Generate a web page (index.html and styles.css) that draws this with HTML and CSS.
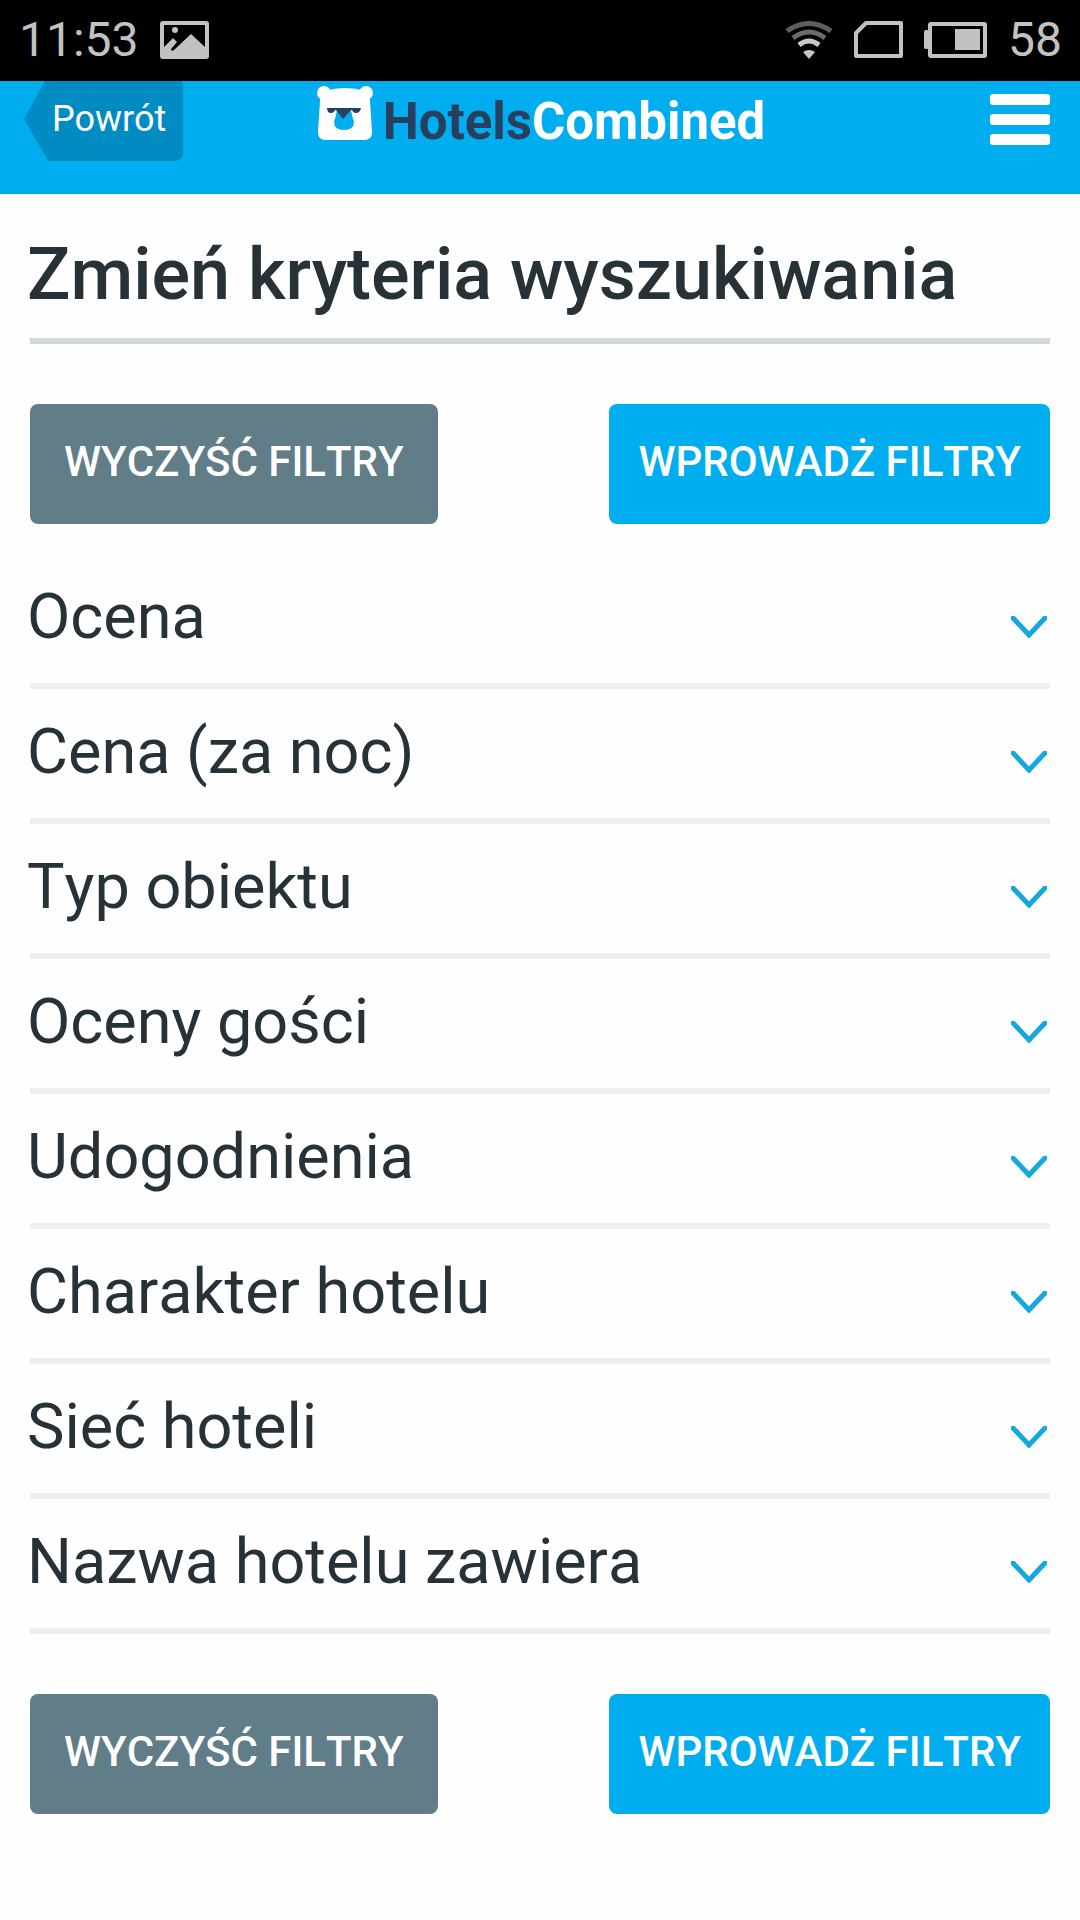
FILE: index.html
```html
<!DOCTYPE html>
<html lang="pl">
<head>
    <meta charset="UTF-8">
    <meta name="viewport" content="width=device-width, initial-scale=1.0">
    <title>HotelsCombined</title>
    <link rel="stylesheet" href="styles.css">
</head>
<body>
    <div class="status-bar">
        <span>11:53</span>
        <svg width="49" height="39" viewBox="0 0 49 39">
            <path fill="#c2c2c2" fill-rule="evenodd" d="M3 0H46Q49 0 49 3V35Q49 38 46 38H3Q0 38 0 35V3Q0 0 3 0ZM4 4V26L13 17L17 21L11 28Q11 31 14 29L31 13L45 26V4Z"/>
            <circle cx="15" cy="9" r="3" fill="#c2c2c2"/>
        </svg>
        <div class="status-right">
            <svg width="48" height="38" viewBox="0 0 48 38" fill="none" stroke-width="5">
                <path stroke="#5e5e5e" d="M2 10Q24-5 46 10"/>
                <path stroke="#6c6c6c" d="M8 17Q24 5 40 17"/>
                <path stroke="#c8c8c8" d="M14 24Q24 16 34 24"/>
                <path fill="#c8c8c8" d="M18 31Q24 27 30 31L24 38Z"/>
            </svg>
            <svg width="49" height="38" viewBox="0 0 49 38">
                <path fill="none" stroke="#c2c2c2" stroke-width="4" stroke-linejoin="round" d="M12 2H47V35H2V12Z"/>
            </svg>
            <svg width="63" height="36" viewBox="0 0 63 36">
                <rect x="6" y="2" width="55" height="32" rx="1" fill="none" stroke="#c2c2c2" stroke-width="4"/>
                <rect x="0" y="8" width="5" height="19" rx="2" fill="#c2c2c2"/>
                <rect x="31" y="7" width="25" height="21" fill="#c2c2c2"/>
            </svg>
            <span>58</span>
        </div>
    </div>

    <header class="header">
        <a class="back" href="#">Powrót</a>
        <a class="logo" href="#">
            <svg width="56" height="54" viewBox="0 0 56 54">
                <g fill="#fff">
                    <circle cx="7" cy="7" r="7"/>
                    <circle cx="49" cy="7" r="7"/>
                    <path d="M8 5Q28-1 48 5Q52 7 53 15L55 46Q55 54 47 54H9Q1 54 1 46L3 15Q4 7 8 5Z"/>
                </g>
                <path fill="#00aef0" d="M20 24H34Q35 30 37 36Q37 44 27 44Q17 44 17 36Q19 30 20 24Z"/>
                <path fill="#274060" d="M10 22H44Q43 27 39 27Q36 27 35 24H34L26 33L19 24H18Q17 27 14 27Q10 27 10 22Z"/>
            </svg>
            <span class="logo-text"><span class="dark">Hotels</span>Combined</span>
        </a>
        <button class="menu" aria-label="Menu">
            <span></span>
            <span></span>
            <span></span>
        </button>
    </header>

    <main class="content">
        <h1>Zmień kryteria wyszukiwania</h1>

        <div class="actions">
            <button class="btn clear">WYCZYŚĆ FILTRY</button>
            <button class="btn apply">WPROWADŻ FILTRY</button>
        </div>

        <div class="filters">
            <button class="filter">Ocena <svg class="chevron" viewBox="0 0 36 22"><path d="M2 2L18 19L34 2"/></svg></button>
            <button class="filter">Cena (za noc) <svg class="chevron" viewBox="0 0 36 22"><path d="M2 2L18 19L34 2"/></svg></button>
            <button class="filter">Typ obiektu <svg class="chevron" viewBox="0 0 36 22"><path d="M2 2L18 19L34 2"/></svg></button>
            <button class="filter">Oceny gości <svg class="chevron" viewBox="0 0 36 22"><path d="M2 2L18 19L34 2"/></svg></button>
            <button class="filter">Udogodnienia <svg class="chevron" viewBox="0 0 36 22"><path d="M2 2L18 19L34 2"/></svg></button>
            <button class="filter">Charakter hotelu <svg class="chevron" viewBox="0 0 36 22"><path d="M2 2L18 19L34 2"/></svg></button>
            <button class="filter">Sieć hoteli <svg class="chevron" viewBox="0 0 36 22"><path d="M2 2L18 19L34 2"/></svg></button>
            <button class="filter">Nazwa hotelu zawiera <svg class="chevron" viewBox="0 0 36 22"><path d="M2 2L18 19L34 2"/></svg></button>
        </div>

        <div class="actions">
            <button class="btn clear">WYCZYŚĆ FILTRY</button>
            <button class="btn apply">WPROWADŻ FILTRY</button>
        </div>
    </main>
</body>
</html>
```
FILE: styles.css
```css
* {
    box-sizing: border-box;
}
body {
    margin: 0;
    font-family: Roboto, sans-serif;
    color: #263238;
    background-color: #fefefe;
}
button {
    font-family: inherit;
    font-kerning: none;
    border: none;
    cursor: pointer;
}
.status-bar {
    display: flex;
    align-items: center;
    gap: 21px;
    padding: 12px 18px 13px 19px;
    font-size: 48px;
    line-height: 56px;
    color: #c2c2c2;
    background-color: #000;
}
.status-right {
    display: flex;
    align-items: center;
    gap: 21px;
    margin-left: auto;
}
.header {
    display: grid;
    grid-template-columns: 1fr auto 1fr;
    align-items: start;
    padding: 0 30px 33px 24px;
    background-color: #00aef0;
}
.back {
    justify-self: start;
    padding: 17px 17px 21px 28px;
    font-size: 36px;
    line-height: 42px;
    color: #fff;
    text-decoration: none;
    background-color: #008bc2;
    border-radius: 0 4px 8px 0;
    clip-path: polygon(21px 0, 100% 0, 100% 100%, 24px 100%, 0 38px);
}
.logo {
    display: flex;
    gap: 10px;
    padding: 5px 0 0 8px;
    text-decoration: none;
}
.logo-text {
    font-size: 51px;
    font-weight: bold;
    line-height: 71px;
    color: #fff;
}
.logo-text .dark {
    color: #274060;
}
.menu {
    display: flex;
    flex-direction: column;
    justify-self: end;
    gap: 9px;
    width: 60px;
    margin-top: 13px;
    padding: 0;
    background: none;
}
.menu span {
    height: 11px;
    border-radius: 3px;
    background-color: #fff;
}
.content {
    padding: 0 30px;
}
h1 {
    margin: 0;
    padding: 39px 0 21px;
    font-size: 72px;
    font-weight: 500;
    line-height: 84px;
    text-indent: -3px;
    border-bottom: 6px solid #cfd8da;
}
.actions {
    display: flex;
    justify-content: space-between;
    padding: 60px 0 30px;
}
.btn {
    padding: 33px 29px 37px;
    font-size: 42px;
    font-weight: 500;
    line-height: 50px;
    color: #fff;
    border-radius: 8px;
}
.clear {
    padding-left: 34px;
    padding-right: 34px;
    background-color: #607d88;
}
.apply {
    background-color: #00aef0;
}
.filter {
    display: flex;
    justify-content: space-between;
    align-items: center;
    width: 100%;
    padding: 26px 3px 29px 0;
    font-size: 63px;
    line-height: 74px;
    color: #263238;
    text-align: left;
    text-indent: -3px;
    background: none;
    border-bottom: 6px solid #eceff0;
}
.chevron {
    width: 36px;
    height: 22px;
    margin-top: 20px;
    fill: none;
    stroke: #14a8e0;
    stroke-width: 5;
    stroke-linecap: round;
}
```
